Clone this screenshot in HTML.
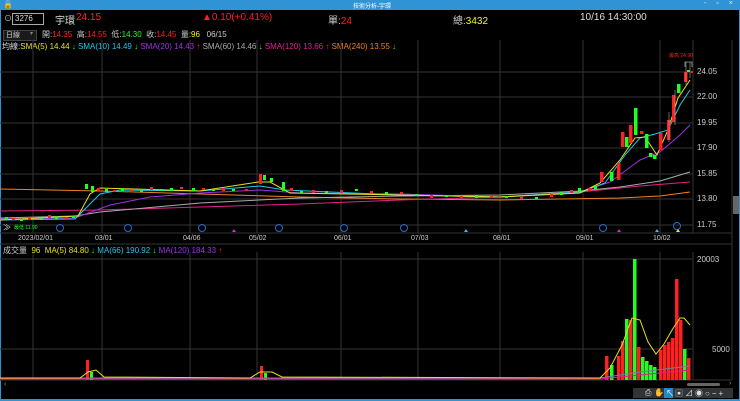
<!DOCTYPE html>
<html><head><meta charset="utf-8"><style>
html,body{margin:0;padding:0;background:#000;width:740px;height:401px;overflow:hidden;font-family:"Liberation Sans","Noto Sans CJK TC",sans-serif;}
.t{position:absolute;white-space:nowrap;}
</style></head><body>
<div style="position:absolute;left:0;top:0;width:740px;height:401px;background:#000;">
<!-- title bar -->
<div style="position:absolute;left:0;top:0;width:740px;height:10px;background:#2f93d6;"></div>
<div class="t" style="left:3px;top:0;font-size:8px;color:#fff;">🔒</div>
<div class="t" style="left:353px;top:1px;font-size:6px;color:#fff;">技術分析-宇環</div>
<div class="t" style="left:704px;top:0;font-size:7px;color:#dfefff;letter-spacing:4px;">- ▫ ×</div>
<div style="position:absolute;left:0;top:10px;width:1px;height:391px;background:#2f93d6;"></div>
<div style="position:absolute;left:739px;top:10px;width:1px;height:391px;background:#2f93d6;"></div>
<div style="position:absolute;left:0;top:399px;width:740px;height:2px;background:#2f93d6;"></div>

<!-- row 1 -->
<div class="t" style="left:4px;top:13px;font-size:8px;color:#ccc;">⊙</div>
<div style="position:absolute;left:12px;top:13px;width:30px;height:10px;border:1px solid #aaa;background:#000;"></div>
<div class="t" style="left:15px;top:14px;font-size:8px;color:#ddd;">3276</div>
<div class="t" style="left:55px;top:12px;font-size:10px;color:#ddd;">宇環</div>
<div class="t" style="left:76px;top:12px;font-size:10px;color:#ff2020;">24.15</div>
<div class="t" style="left:202px;top:12px;font-size:10px;color:#ff2020;">▲0.10(+0.41%)</div>
<div class="t" style="left:328px;top:12px;font-size:10px;color:#ccc;">單:<span style="color:#ff2020">24</span></div>
<div class="t" style="left:453px;top:12px;font-size:10px;color:#ccc;">總:<span style="color:#f0f020">3432</span></div>
<div class="t" style="left:580px;top:12px;font-size:10px;color:#ddd;">10/16 14:30:00</div>

<!-- row 2 -->
<div style="position:absolute;left:3px;top:30px;width:32px;height:9px;background:#1a1a1a;border:1px solid #444;"></div>
<div class="t" style="left:6px;top:30px;font-size:7px;color:#ccc;">日線</div>
<div class="t" style="left:30px;top:30px;font-size:6px;color:#888;">▾</div>
<div class="t" style="left:42px;top:29px;font-size:8px;color:#ccc;">開:<span style="color:#ff2020">14.35</span> &nbsp;高:<span style="color:#ff2020">14.55</span> &nbsp;低:<span style="color:#20ff20">14.30</span> &nbsp;收:<span style="color:#ff2020">14.45</span> &nbsp;量:<span style="color:#f0f020">96</span> &nbsp;&nbsp;06/15</div>

<!-- legend -->
<div class="t" style="left:2px;top:41px;font-size:8px;color:#ddd;">均線:<span style="color:#e8e020">SMA(5) 14.44 <span style="color:#20ff20">↓</span></span> <span style="color:#20c8e8">SMA(10) 14.49 <span style="color:#20ff20">↓</span></span> <span style="color:#a030e8">SMA(20) 14.43 <span style="color:#ff2020">↑</span></span> <span style="color:#aaa">SMA(60) 14.46 <span style="color:#20ff20">↓</span></span> <span style="color:#e02090">SMA(120) 13.66 <span style="color:#ff2020">↑</span></span> <span style="color:#f08020">SMA(240) 13.55 <span style="color:#20ff20">↓</span></span></div>

<svg style="position:absolute;left:0;top:0" width="740" height="401">
<g stroke="#333" stroke-width="1" fill="none">
<line x1="0" y1="72" x2="693" y2="72"/><line x1="0" y1="97" x2="693" y2="97"/><line x1="0" y1="123" x2="693" y2="123"/><line x1="0" y1="148" x2="693" y2="148"/><line x1="0" y1="174" x2="693" y2="174"/><line x1="0" y1="199" x2="693" y2="199"/><line x1="0" y1="225" x2="693" y2="225"/>
<line x1="0" y1="259" x2="693" y2="259"/><line x1="0" y1="349" x2="693" y2="349"/>
<line x1="33" y1="40" x2="33" y2="233"/><line x1="102" y1="40" x2="102" y2="233"/><line x1="190" y1="40" x2="190" y2="233"/><line x1="257" y1="40" x2="257" y2="233"/><line x1="341" y1="40" x2="341" y2="233"/><line x1="418" y1="40" x2="418" y2="233"/><line x1="500" y1="40" x2="500" y2="233"/><line x1="583" y1="40" x2="583" y2="233"/><line x1="660" y1="40" x2="660" y2="233"/>
<line x1="33" y1="252" x2="33" y2="380"/><line x1="102" y1="252" x2="102" y2="380"/><line x1="190" y1="252" x2="190" y2="380"/><line x1="257" y1="252" x2="257" y2="380"/><line x1="341" y1="252" x2="341" y2="380"/><line x1="418" y1="252" x2="418" y2="380"/><line x1="500" y1="252" x2="500" y2="380"/><line x1="583" y1="252" x2="583" y2="380"/><line x1="660" y1="252" x2="660" y2="380"/>
<line x1="693" y1="40" x2="693" y2="233"/><line x1="693" y1="252" x2="693" y2="380"/>
<line x1="732" y1="40" x2="732" y2="380"/>
<line x1="0" y1="233" x2="732" y2="233"/><line x1="0" y1="244" x2="732" y2="244"/>
<line x1="0" y1="380" x2="732" y2="380"/>
</g>
<!-- MA lines -->
<g fill="none" stroke-width="1">
<polyline stroke="#f08020" points="0,189 100,191 200,194 300,197 400,199 500,200 560,199 620,198 660,196 690,192"/>
<polyline stroke="#e02090" points="0,211 100,210 200,207 300,204 400,200 500,197 580,192 640,186 690,182"/>
<polyline stroke="#aaa" points="0,218 75,216 100,212 200,203 300,198 400,196 500,195 580,191 620,187 660,181 690,172"/>
<polyline stroke="#a030e8" points="0,219 75,218 110,205 150,197 200,193 260,190 300,193 400,194 500,197 580,192 610,182 640,160 660,152 680,135 690,125"/>
<polyline stroke="#20c8e8" points="0,220 75,219 100,194 120,190 200,191 260,186 285,190 400,195 500,197 580,192 605,183 625,155 640,138 655,134 668,130 680,105 690,90"/>
<polyline stroke="#e8e020" points="0,220 78,216 90,194 100,188 200,191 258,182 270,182 290,193 400,195 500,197 580,193 600,183 620,160 635,138 645,137 657,155 668,130 678,98 690,80"/>
</g>
<!-- candles low region -->
<g>
<rect x="5" y="217" width="3" height="3" fill="#20ff20"/><rect x="12" y="218" width="3" height="2" fill="#ff2020"/><rect x="20" y="219" width="3" height="2" fill="#20ff20"/><rect x="28" y="218" width="3" height="2" fill="#ff2020"/><rect x="40" y="218" width="3" height="2" fill="#20ff20"/><rect x="48" y="215" width="3" height="3" fill="#ff2020"/><rect x="55" y="216" width="3" height="3" fill="#20ff20"/><rect x="65" y="217" width="3" height="2" fill="#ff2020"/><rect x="72" y="216" width="3" height="2" fill="#20ff20"/>
<rect x="85" y="184" width="3" height="5" fill="#20ff20"/><rect x="91" y="186" width="3" height="6" fill="#20ff20"/><rect x="97" y="188" width="3" height="3" fill="#ff2020"/><rect x="105" y="189" width="3" height="3" fill="#20ff20"/><rect x="113" y="190" width="3" height="2" fill="#ff2020"/><rect x="121" y="188" width="3" height="3" fill="#20ff20"/><rect x="130" y="190" width="3" height="2" fill="#ff2020"/><rect x="140" y="189" width="3" height="3" fill="#20ff20"/><rect x="150" y="187" width="3" height="3" fill="#ff2020"/><rect x="160" y="189" width="3" height="2" fill="#20ff20"/><rect x="170" y="188" width="3" height="3" fill="#20ff20"/><rect x="180" y="187" width="3" height="2" fill="#ff2020"/><rect x="192" y="188" width="3" height="3" fill="#20ff20"/><rect x="202" y="188" width="3" height="2" fill="#ff2020"/><rect x="212" y="189" width="3" height="2" fill="#20ff20"/><rect x="222" y="188" width="3" height="3" fill="#ff2020"/><rect x="232" y="189" width="3" height="2" fill="#20ff20"/><rect x="245" y="189" width="3" height="2" fill="#ff2020"/>
<rect x="259" y="174" width="3" height="10" fill="#ff2020"/><rect x="263" y="175" width="3" height="5" fill="#20ff20"/><rect x="270" y="178" width="3" height="4" fill="#20ff20"/><rect x="282" y="182" width="3" height="9" fill="#20ff20"/><rect x="290" y="188" width="3" height="3" fill="#ff2020"/>
<rect x="300" y="191" width="3" height="2" fill="#20ff20"/><rect x="312" y="190" width="3" height="3" fill="#ff2020"/><rect x="325" y="191" width="3" height="2" fill="#20ff20"/><rect x="340" y="190" width="3" height="3" fill="#ff2020"/><rect x="355" y="189" width="3" height="2" fill="#20ff20"/><rect x="370" y="191" width="3" height="2" fill="#ff2020"/><rect x="385" y="192" width="3" height="2" fill="#20ff20"/><rect x="400" y="192" width="3" height="2" fill="#ff2020"/><rect x="415" y="194" width="3" height="2" fill="#20ff20"/><rect x="430" y="195" width="3" height="3" fill="#ff2020"/><rect x="445" y="195" width="3" height="2" fill="#20ff20"/><rect x="460" y="196" width="3" height="2" fill="#ff2020"/><rect x="475" y="195" width="3" height="3" fill="#20ff20"/><rect x="490" y="196" width="3" height="2" fill="#ff2020"/><rect x="505" y="196" width="3" height="2" fill="#20ff20"/><rect x="520" y="197" width="3" height="2" fill="#ff2020"/><rect x="535" y="197" width="3" height="2" fill="#20ff20"/><rect x="550" y="194" width="3" height="3" fill="#ff2020"/><rect x="560" y="192" width="3" height="3" fill="#20ff20"/><rect x="570" y="190" width="3" height="3" fill="#ff2020"/><rect x="578" y="188" width="3" height="4" fill="#20ff20"/><rect x="588" y="188" width="3" height="3" fill="#ff2020"/><rect x="594" y="186" width="3" height="3" fill="#20ff20"/>
<!-- rally -->
<rect x="600" y="172" width="3.5" height="10" fill="#ff2020"/><rect x="610" y="172" width="3.5" height="9" fill="#20ff20"/><rect x="617" y="163" width="3.5" height="17" fill="#ff2020"/>
<rect x="621" y="132" width="3.5" height="15" fill="#ff2020"/><rect x="625" y="137" width="3.5" height="10" fill="#20ff20"/><rect x="629" y="125" width="3.5" height="18" fill="#ff2020"/><rect x="634" y="108" width="3.5" height="27" fill="#20ff20"/><rect x="640" y="131" width="3.5" height="3" fill="#ff2020"/><rect x="645" y="134" width="3.5" height="14" fill="#20ff20"/><rect x="649" y="153" width="3.5" height="4" fill="#20ff20"/><rect x="653" y="155" width="3.5" height="4" fill="#20ff20"/>
<rect x="659" y="133" width="3.5" height="17" fill="#ff2020"/><rect x="667" y="120" width="3.5" height="20" fill="#ff2020"/><rect x="672" y="95" width="3.5" height="27" fill="#ff2020"/><rect x="677" y="84" width="3.5" height="9" fill="#20ff20"/><rect x="684" y="72" width="3.5" height="10" fill="#ff2020"/><rect x="687" y="70" width="3" height="2" fill="#20ff20"/><rect x="691" y="71" width="2" height="2" fill="#ff2020"/>
<g stroke="#aaa" stroke-width="0.6"><line x1="675" y1="90" x2="675" y2="125"/><line x1="686" y1="62" x2="686" y2="85"/><line x1="690" y1="62" x2="690" y2="78"/><line x1="669" y1="112" x2="669" y2="142"/></g>
<polyline points="685,67 685,62 692,62 692,67" fill="none" stroke="#ddd" stroke-width="0.6"/>
</g>
<!-- markers -->
<g fill="none" stroke="#2a6ad0" stroke-width="1"><circle cx="60" cy="228" r="3.5"/><circle cx="128" cy="228" r="3.5"/><circle cx="202" cy="228" r="3.5"/><circle cx="279" cy="228" r="3.5"/><circle cx="344" cy="228" r="3.5"/><circle cx="404" cy="228" r="3.5"/><circle cx="603" cy="228" r="3.5"/><circle cx="677" cy="226" r="3.5"/></g>
<polygon points="232,232 234,229 236,232" fill="#e020e0"/><polygon points="617,232 619,229 621,232" fill="#e020e0"/><polygon points="464,232 466,229 468,232" fill="#20c8e8"/><polygon points="655,232 657,229 659,232" fill="#20c8e8"/><polygon points="676,232 678,229 680,232" fill="#f0f020"/>
<!-- volume -->
<g fill="#ff2020">
<rect x="86" y="360" width="3" height="20"/><rect x="260" y="366" width="3" height="14"/>
<rect x="605" y="356" width="3.5" height="24"/><rect x="617" y="356" width="3.5" height="24"/><rect x="621" y="341" width="3.5" height="39"/><rect x="629" y="320" width="3.5" height="60"/><rect x="637" y="347" width="3.5" height="33"/>
<rect x="659" y="350" width="3.5" height="30"/><rect x="663" y="345" width="3.5" height="35"/><rect x="667" y="342" width="3.5" height="38"/><rect x="671" y="338" width="3.5" height="42"/><rect x="675" y="279" width="3.5" height="101"/><rect x="679" y="320" width="3.5" height="60"/><rect x="687" y="358" width="3.5" height="22"/>
</g>
<g fill="#20ff20">
<rect x="90" y="372" width="3" height="8"/><rect x="264" y="373" width="3" height="7"/>
<rect x="610" y="365" width="3.5" height="15"/><rect x="625" y="319" width="3.5" height="61"/><rect x="633" y="259" width="3.5" height="121"/><rect x="641" y="357" width="3.5" height="23"/><rect x="645" y="361" width="3.5" height="19"/><rect x="649" y="365" width="3.5" height="15"/><rect x="653" y="367" width="3.5" height="13"/><rect x="683" y="349" width="3.5" height="31"/>
</g>
<g fill="none" stroke-width="1">
<polyline stroke="#7080a0" points="0,378 600,378 640,372 690,366"/>
<polyline stroke="#e02090" points="0,379 600,379 650,374 690,370"/>
<polyline stroke="#e8e020" points="0,378 80,378 88,372 96,370 104,377 250,378 260,372 272,372 282,377 600,378 610,368 622,345 632,318 640,320 648,342 656,354 664,344 672,330 680,318 684,318 690,325"/>
</g>
</svg>

<!-- axis labels -->
<div class="t" style="left:697px;top:67px;font-size:8px;color:#ccc;">24.05</div>
<div class="t" style="left:697px;top:92px;font-size:8px;color:#ccc;">22.00</div>
<div class="t" style="left:697px;top:118px;font-size:8px;color:#ccc;">19.95</div>
<div class="t" style="left:697px;top:143px;font-size:8px;color:#ccc;">17.90</div>
<div class="t" style="left:697px;top:169px;font-size:8px;color:#ccc;">15.85</div>
<div class="t" style="left:697px;top:194px;font-size:8px;color:#ccc;">13.80</div>
<div class="t" style="left:697px;top:220px;font-size:8px;color:#ccc;">11.75</div>
<div class="t" style="left:697px;top:255px;font-size:8px;color:#ccc;">20003</div>
<div class="t" style="left:712px;top:345px;font-size:8px;color:#ccc;">5000</div>
<div class="t" style="left:669px;top:52px;font-size:5px;color:#ff2020;">最高 24.90</div>
<div class="t" style="left:3px;top:222px;font-size:8px;color:#ddd;">≫</div>
<div class="t" style="left:14px;top:224px;font-size:5px;color:#20ff20;">最低 11.90</div>
<div style="position:absolute;left:733px;top:196px;width:6px;height:18px;background:#666;"></div>

<div class="t" style="left:18px;top:235px;font-size:7px;color:#ccc;">2023/02/01</div>
<div class="t" style="left:95px;top:235px;font-size:7px;color:#ccc;">03/01</div>
<div class="t" style="left:183px;top:235px;font-size:7px;color:#ccc;">04/06</div>
<div class="t" style="left:249px;top:235px;font-size:7px;color:#ccc;">05/02</div>
<div class="t" style="left:334px;top:235px;font-size:7px;color:#ccc;">06/01</div>
<div class="t" style="left:411px;top:235px;font-size:7px;color:#ccc;">07/03</div>
<div class="t" style="left:493px;top:235px;font-size:7px;color:#ccc;">08/01</div>
<div class="t" style="left:576px;top:235px;font-size:7px;color:#ccc;">09/01</div>
<div class="t" style="left:653px;top:235px;font-size:7px;color:#ccc;">10/02</div>

<div class="t" style="left:3px;top:245px;font-size:8px;color:#ccc;">成交量 &nbsp;<span style="color:#e8e020">96 &nbsp;MA(5) 84.80 <span style="color:#20ff20">↓</span></span> <span style="color:#20c8e8">MA(66) 190.92 <span style="color:#20ff20">↓</span></span> <span style="color:#a030e8">MA(120) 184.33 <span style="color:#ff2020">↑</span></span></div>

<!-- scrollbar & toolbar -->
<div class="t" style="left:4px;top:381px;font-size:7px;color:#999;">‹</div>
<div style="position:absolute;left:687px;top:383px;width:33px;height:3px;background:#666;border-radius:2px;"></div>
<div class="t" style="left:729px;top:380px;font-size:7px;color:#999;">›</div>
<div style="position:absolute;left:633px;top:388px;width:100px;height:10px;background:#333;"></div>
<div class="t" style="left:645px;top:388px;font-size:8px;color:#ddd;letter-spacing:3px;">⎙✋</div>
<div style="position:absolute;left:664px;top:388px;width:9px;height:10px;background:#1e88d8;"></div>
<div class="t" style="left:666px;top:388px;font-size:8px;color:#fff;">↖</div>
<div class="t" style="left:675px;top:388px;font-size:8px;color:#ddd;letter-spacing:2px;">▣⊿◉○−+</div>
</div>
</body></html>
